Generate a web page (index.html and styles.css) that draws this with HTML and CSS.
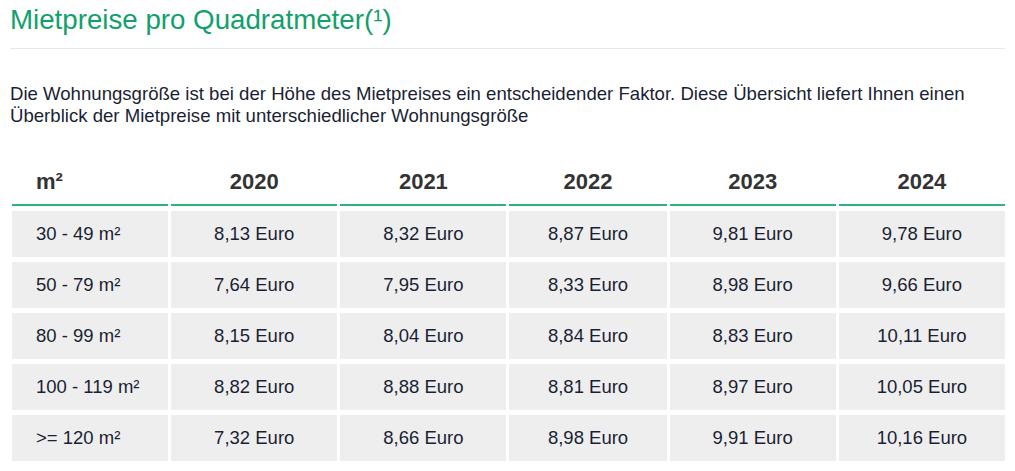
FILE: index.html
```html
<!DOCTYPE html>
<html lang="de">
<head>
<meta charset="utf-8">
<title>Mietpreise pro Quadratmeter</title>
<link rel="stylesheet" href="styles.css">
</head>
<body>
<div class="page">
  <h2 class="title">Mietpreise pro Quadratmeter(¹)</h2>
  <hr class="rule">
  <p class="intro">Die Wohnungsgröße ist bei der Höhe des Mietpreises ein entscheidender Faktor. Diese Übersicht liefert Ihnen einen Überblick der Mietpreise mit unterschiedlicher Wohnungsgröße</p>
  <table class="prices">
    <colgroup>
      <col class="c-size"><col class="c-year"><col class="c-year"><col class="c-year4"><col class="c-year"><col class="c-year">
    </colgroup>
    <thead>
      <tr><th class="first">m²</th><th>2020</th><th>2021</th><th>2022</th><th>2023</th><th>2024</th></tr>
    </thead>
    <tbody>
      <tr><td class="first">30 - 49 m²</td><td>8,13 Euro</td><td>8,32 Euro</td><td>8,87 Euro</td><td>9,81 Euro</td><td>9,78 Euro</td></tr>
      <tr><td class="first">50 - 79 m²</td><td>7,64 Euro</td><td>7,95 Euro</td><td>8,33 Euro</td><td>8,98 Euro</td><td>9,66 Euro</td></tr>
      <tr><td class="first">80 - 99 m²</td><td>8,15 Euro</td><td>8,04 Euro</td><td>8,84 Euro</td><td>8,83 Euro</td><td>10,11 Euro</td></tr>
      <tr><td class="first">100 - 119 m²</td><td>8,82 Euro</td><td>8,88 Euro</td><td>8,81 Euro</td><td>8,97 Euro</td><td>10,05 Euro</td></tr>
      <tr><td class="first">&gt;= 120 m²</td><td>7,32 Euro</td><td>8,66 Euro</td><td>8,98 Euro</td><td>9,91 Euro</td><td>10,16 Euro</td></tr>
    </tbody>
  </table>
</div>
</body>
</html>
```
FILE: styles.css
```css
html, body {
  margin: 0;
  padding: 0;
  background: #ffffff;
}
body {
  font-family: "Liberation Sans", Arial, sans-serif;
  color: #1a1f33;
}
.page {
  padding: 3px 10px 0 10px;
}
.title {
  margin: 0;
  font-size: 27.7px;
  line-height: 34px;
  font-weight: normal;
  color: #12a06c;
}
.rule {
  margin: 11px 0 0 0;
  border: 0;
  height: 1px;
  background: #e8e8e8;
  width: 995px;
}
.intro {
  margin: 34px 0 0 0;
  font-size: 18.6px;
  line-height: 22px;
  width: 990px;
}
.prices {
  margin: 27px 0 0 -1px;
  border-spacing: 3px 5.5px;
  table-layout: fixed;
  width: 999px;
}
.c-size { width: 156px; }
.c-year { width: 166px; }
.c-year4 { width: 157px; }
.prices th {
  font-size: 22px;
  font-weight: bold;
  color: #333333;
  text-align: center;
  height: 45px;
  padding: 0;
  border-bottom: 2px solid #2db27d;
  vertical-align: middle;
}
.prices td {
  font-size: 18.5px;
  color: #1a1f33;
  background: #eeeeee;
  text-align: center;
  height: 46px;
  padding: 0;
  vertical-align: middle;
}
.prices .first {
  text-align: left;
  padding-left: 24px;
}
```
